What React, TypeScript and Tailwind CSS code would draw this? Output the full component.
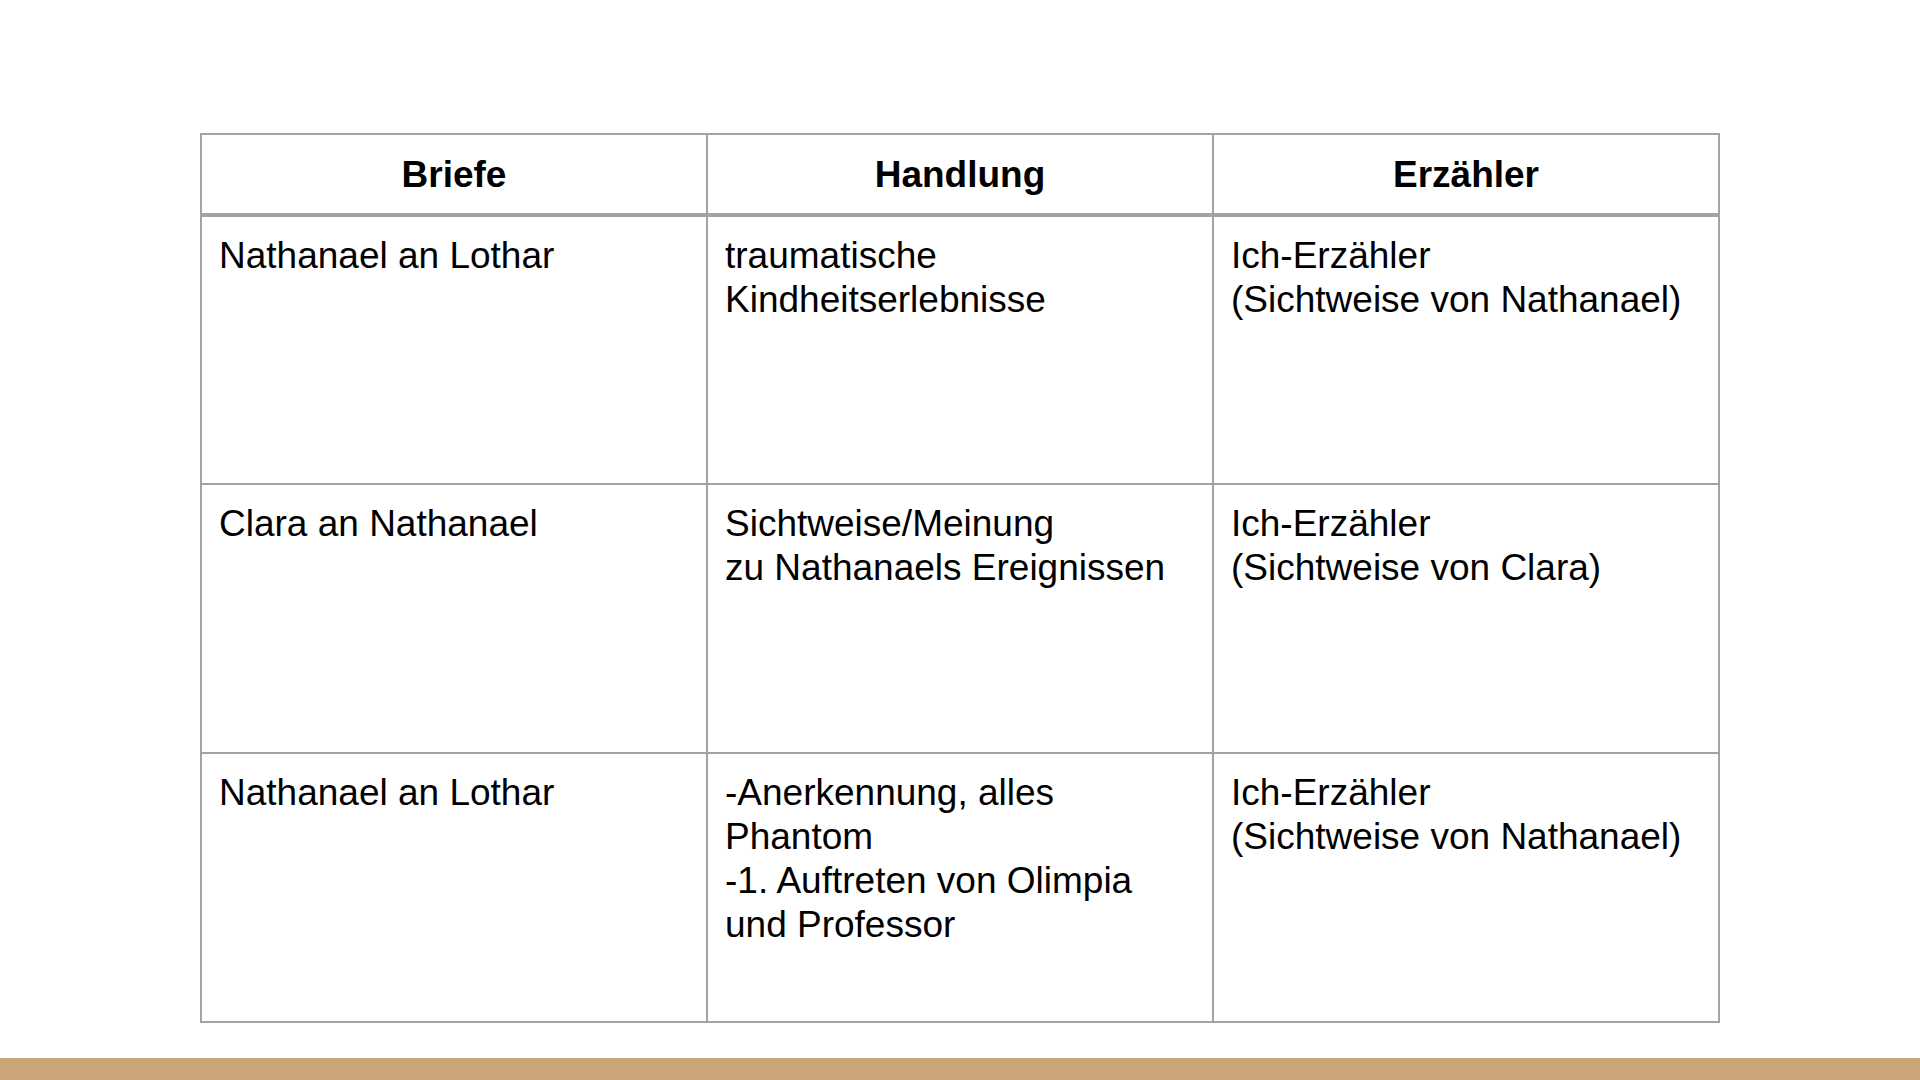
const rows = [
  {
    brief: "Nathanael an Lothar",
    handlung: ["traumatische", "Kindheitserlebnisse"],
    erzaehler: ["Ich-Erzähler", "(Sichtweise von Nathanael)"],
  },
  {
    brief: "Clara an Nathanael",
    handlung: ["Sichtweise/Meinung", "zu Nathanaels Ereignissen"],
    erzaehler: ["Ich-Erzähler", "(Sichtweise von Clara)"],
  },
  {
    brief: "Nathanael an Lothar",
    handlung: ["-Anerkennung, alles", "Phantom", "-1. Auftreten von Olimpia", "und Professor"],
    erzaehler: ["Ich-Erzähler", "(Sichtweise von Nathanael)"],
  },
];

export default function App() {
  return (
    <div className="w-[1920px] h-[1080px] bg-white flex flex-col font-['Liberation_Sans',Arial,sans-serif] text-black overflow-hidden">
      {/* Table */}
      <div className="flex-1 pt-[133px] pl-[200px]">
        <table className="w-[1520px] table-fixed border-collapse text-[37px] leading-[44px]">
          <thead>
            <tr className="h-[81px]">
              {["Briefe", "Handlung", "Erzähler"].map((h) => (
                <th
                  key={h}
                  className="border-2 border-b-4 border-[#a3a3a3] font-bold text-center align-middle pt-[2px]"
                >
                  {h}
                </th>
              ))}
            </tr>
          </thead>
          <tbody>
            {rows.map((r, i) => (
              <tr key={i} className="h-[269px]">
                <td className="border-2 border-[#a3a3a3] align-top pl-[17px] pr-4 pt-[17px]">{r.brief}</td>
                <td className="border-2 border-[#a3a3a3] align-top pl-[17px] pr-4 pt-[17px]">
                  {r.handlung.map((l) => (
                    <div key={l}>{l}</div>
                  ))}
                </td>
                <td className="border-2 border-[#a3a3a3] align-top pl-[17px] pr-4 pt-[17px]">
                  {r.erzaehler.map((l) => (
                    <div key={l}>{l}</div>
                  ))}
                </td>
              </tr>
            ))}
          </tbody>
        </table>
      </div>

      {/* Bottom bar */}
      <div className="h-[22px] bg-[#cca57b]" />
    </div>
  );
}
